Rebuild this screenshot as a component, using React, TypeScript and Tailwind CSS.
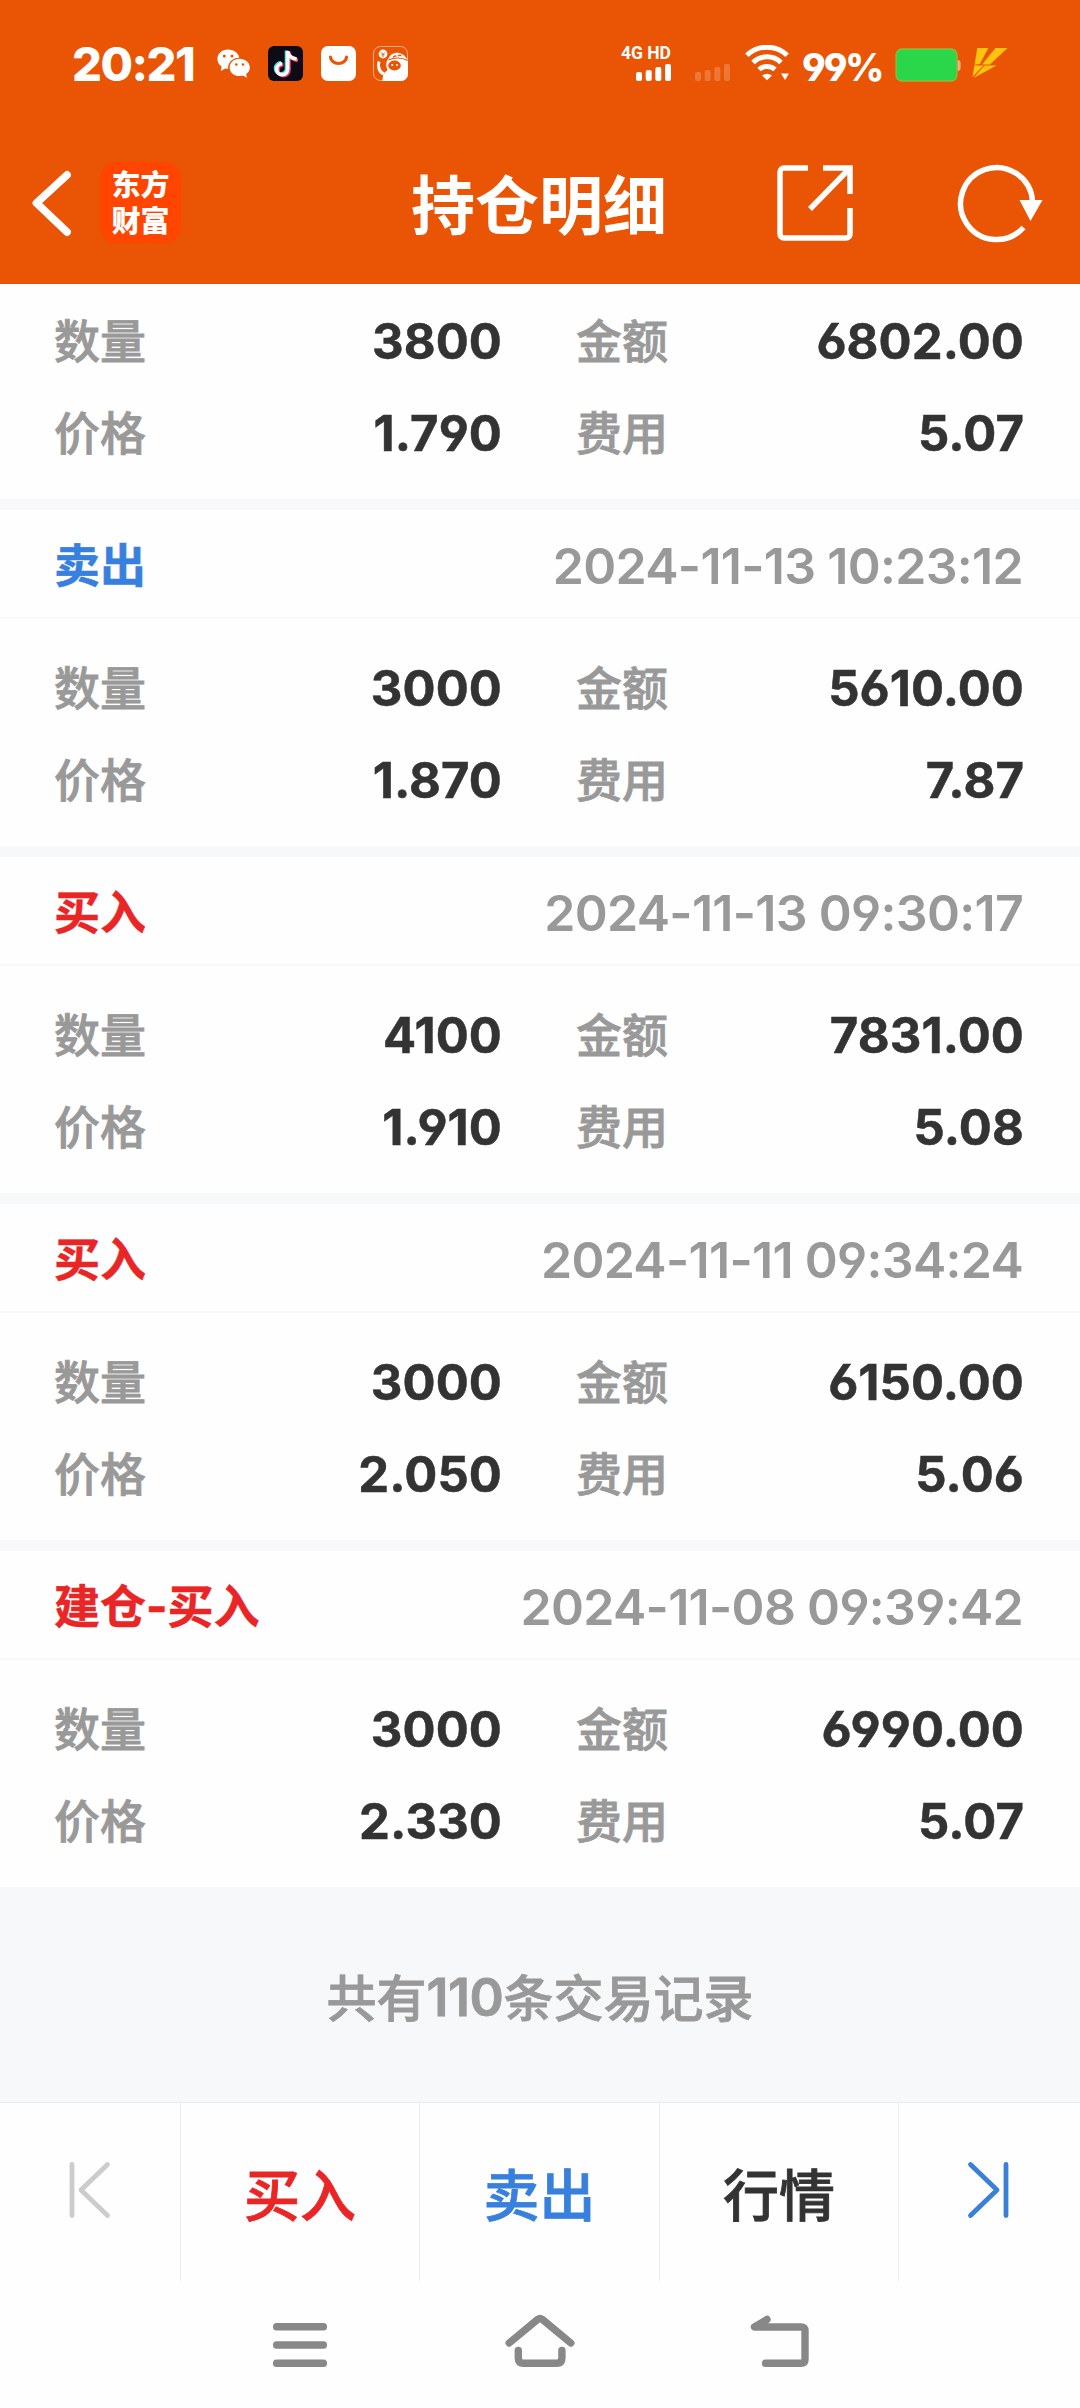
import type { ReactNode } from 'react'

type Side = 'buy' | 'sell'

interface Trade {
  label?: string
  side?: Side
  time?: string
  quantity: string
  amount: string
  price: string
  fee: string
}

const trades: Trade[] = [
  { quantity: '3800', amount: '6802.00', price: '1.790', fee: '5.07' },
  { label: '卖出', side: 'sell', time: '2024-11-13 10:23:12', quantity: '3000', amount: '5610.00', price: '1.870', fee: '7.87' },
  { label: '买入', side: 'buy', time: '2024-11-13 09:30:17', quantity: '4100', amount: '7831.00', price: '1.910', fee: '5.08' },
  { label: '买入', side: 'buy', time: '2024-11-11 09:34:24', quantity: '3000', amount: '6150.00', price: '2.050', fee: '5.06' },
  { label: '建仓-买入', side: 'buy', time: '2024-11-08 09:39:42', quantity: '3000', amount: '6990.00', price: '2.330', fee: '5.07' },
]

function SignalBars({ className }: { className?: string }) {
  return (
    <svg width="35" height="17" viewBox="0 0 35 17" fill="#fff" className={className}>
      <rect x="0" y="8" width="6" height="9" rx="2" />
      <rect x="9.7" y="6" width="6" height="11" rx="2" />
      <rect x="19.3" y="3" width="6" height="14" rx="2" />
      <rect x="29" y="0" width="6" height="17" rx="2" />
    </svg>
  )
}

function StatusBar() {
  return (
    <div className="flex h-[126px] items-center pl-[72px] pr-[72px]">
      <span className="w-[145px] font-['Inter'] text-[47px] leading-none font-extrabold tracking-[-1.500px]">20:21</span>
      {/* WeChat */}
      <svg width="34" height="29" viewBox="0 0 34 29" className="mt-px">
        <path d="M11 0.500C5 .5 .4 4.500 .4 10c0 3.200 1.600 5.800 4.200 7.600L3.800 22l4.500-2.600c1 .2 1.800.3 2.700.3 6 0 11.400-4.200 11.400-9.700S17 .5 11 .5z" fill="#fff" />
        <ellipse cx="22.500" cy="18.500" rx="11.400" ry="10" fill="#e95504" />
        <path d="M22.500 9.700c-5.500 0-9.800 3.800-9.800 8.700s4.300 8.700 9.800 8.700c1.100 0 2.200-.1 3.200-.5l4.300 2.100-.9-3.700c2.400-1.600 3.700-3.900 3.700-6.600 0-4.900-4.800-8.700-10.300-8.700z" fill="#fff" />
        <g fill="#e95504">
          <circle cx="7.300" cy="7" r="1.500" />
          <circle cx="15" cy="7" r="1.500" />
          <circle cx="19.300" cy="15.500" r="1.300" />
          <circle cx="26" cy="15.500" r="1.300" />
        </g>
      </svg>
      {/* TikTok */}
      <svg width="35" height="35" viewBox="0 0 35 35" className="ml-[17px]">
        <rect width="35" height="35" rx="6" fill="#0d0b15" />
        <g fill="none" strokeWidth="3.600">
          <path d="M18.500 4.500v17.800a5.500 5.500 0 1 1-5.500-5.500M18.500 6c1 4 4 6.500 9 7" stroke="#4fdfe0" />
          <path d="M21 5.500v18.800a5.500 5.500 0 1 1-5.500-5.500M21 7c1 4 4 6.500 9 7.500" stroke="#f0386b" />
          <path d="M19.700 5v18.300a5.500 5.500 0 1 1-5.500-5.500M19.700 6c1 4 4 6.500 9 7" stroke="#fff" />
        </g>
      </svg>
      {/* shop bag */}
      <svg width="35" height="35" viewBox="0 0 35 35" className="ml-[18px]">
        <rect width="35" height="35" rx="7" fill="#fff" />
        <path d="M9.500 11a8 6.500 0 0 0 16 0" fill="none" stroke="#e95504" strokeWidth="3.200" strokeLinecap="round" />
      </svg>
      {/* mascot */}
      <svg width="35" height="35" viewBox="0 0 35 35" className="ml-[17px]">
        <rect x=".5" y=".5" width="34" height="34" rx="7" fill="none" stroke="#fff" strokeOpacity=".5" />
        <circle cx="10" cy="8" r="4.400" fill="#fff" />
        <path d="M8 6.300l2 2 2-2M10 8.300V11M8.300 8.800h3.400" stroke="#e95504" strokeWidth=".9" fill="none" />
        <path d="M9.500 35c0-4.500 1-8 5-11-2-4-1.500-9 1-11.500 1.500-4 6-6.500 10.500-5.500 4 .8 7 3.500 9 8v13a7 7 0 0 1-7 7z" fill="#fff" />
        <path d="M6 15.500c-1.500 5 0 10.500 5 12.500" fill="none" stroke="#fff" strokeWidth="3" />
        <path d="M15.500 14c5-2.500 13-3 19 .5M20 11.500c1-1.500 2.500-2 3.500-1M25 10c1-1 2.500-1 3.500 0" fill="none" stroke="#e95504" strokeWidth="1.200" />
        <ellipse cx="21.500" cy="19.500" rx="6.300" ry="5" fill="#e95504" />
        <g fill="#fff">
          <circle cx="19.200" cy="19" r="1.100" />
          <circle cx="24" cy="19" r="1.100" />
        </g>
      </svg>

      <div className="ml-auto flex items-center">
        <div className="flex flex-col items-end gap-[3px]">
          <span className="font-['Roboto'] text-[17.500px] leading-[15px] font-bold">4G HD</span>
          <SignalBars />
        </div>
        <SignalBars className="mt-[18px] ml-[24px] opacity-20" />
        <svg width="45" height="36" viewBox="0 0 45 36" className="ml-[15px]">
          <g fill="none" stroke="#fff" strokeWidth="5">
            <path d="M1.800 10.200a29.500 29.500 0 0 1 40.400 0" />
            <path d="M8 17.500a20 20 0 0 1 28 0" />
            <path d="M14 24.500a12 12 0 0 1 16 0" />
          </g>
          <path d="M17 30.500q5-3.500 10 0l-5 4.800z" fill="#fff" />
          <path d="M36 28.500h8l-4 6.500z" fill="#fff" />
        </svg>
        <span className="ml-[12px] w-[84px] pt-2 font-['Inter'] text-[38px] leading-[36px] font-extrabold tracking-[-2.200px] whitespace-nowrap [font-feature-settings:'cv04']">99%</span>
        <svg width="66" height="34" viewBox="0 0 66 34" className="mt-[3px] ml-[9px]">
          <rect x="1" y="1" width="61" height="32" rx="6" fill="#2bd74a" stroke="#96b83a" strokeWidth="1.300" />
          <path d="M62.600 12q3 0 3 3v5q0 3-3 3z" fill="#fff" fillOpacity=".5" />
        </svg>
        <svg width="38" height="32" viewBox="0 0 38 32" fill="#ffc20e" className="ml-[9px]">
          <path d="M7.300 1h11L10 17l-5.500.7z" />
          <path d="M25.500 1h12L20 17.500h-8z" />
          <path d="M4.300 18.500h9.200L2.500 30z" />
          <path d="M14.500 18.500h12L3.500 31z" />
        </svg>
      </div>
    </div>
  )
}

function TitleBar() {
  return (
    <div className="flex h-[158px] items-start">
      <svg width="44" height="70" viewBox="0 0 44 70" className="mt-[42px] ml-[30px]">
        <path d="M37 7L6.500 35 37 64" fill="none" stroke="#fff" strokeWidth="7.800" strokeLinecap="round" strokeLinejoin="round" />
      </svg>
      <div className="mt-[36px] ml-[26px] h-[81px] w-[81px] rounded-[16px] bg-[#ff4500] pt-[3px] text-center text-[29px] leading-[36px] font-black">
        东方
        <br />
        财富
      </div>
      <h1 className="mt-[33px] ml-[230px] w-[258px] text-[64px] leading-[84px] font-bold whitespace-nowrap">持仓明细</h1>
      <svg width="78" height="78" viewBox="0 0 78 78" className="mt-[38px] ml-[107px]">
        <g fill="none" stroke="#fff" strokeWidth="5.500">
          <path d="M32 4H8a4 4 0 0 0-4 4v62a4 4 0 0 0 4 4h62a4 4 0 0 0 4-4V44" />
          <path d="M47 4h27v26" />
          <path d="M34 45L73 5" />
        </g>
      </svg>
      <svg width="88" height="80" viewBox="0 0 88 80" className="mt-[38px] ml-[103px]">
        <path d="M66.500 63.500A36 36 0 1 1 75.500 37" fill="none" stroke="#fff" strokeWidth="5.500" />
        <path d="M62.500 36h23L73.500 57z" fill="#fff" />
      </svg>
    </div>
  )
}

function Field({ name, value }: { name: string; value: string }) {
  return (
    <div className="flex h-[92px] items-center justify-between">
      <span className="pb-[7px] text-[46px] font-medium text-[#999] [-webkit-text-stroke:0.8px_#999]">{name}</span>
      <span className="font-['Inter'] text-[49px] font-bold tracking-[0.100px] text-[#333] [-webkit-text-stroke:0.5px_#333] [font-feature-settings:'cv03','cv04']">
        {value}
      </span>
    </div>
  )
}

function TradeCard({ trade }: { trade: Trade }) {
  return (
    <section>
      {trade.label && (
        <div className="flex h-[109px] items-center justify-between border-b-2 border-[#f8f8f9] pr-[57px] pl-[54px]">
          <span className={`pt-[3px] font-['Inter','Noto_Sans_CJK_SC'] text-[46px] font-bold [-webkit-text-stroke:0.5px_currentColor] ${trade.side === 'sell' ? 'text-[#3880dd]' : 'text-[#ea2525]'}`}>
            {trade.label}
          </span>
          <span className="pt-[5px] font-['Inter'] text-[50px] font-semibold tracking-[-0.700px] text-[#999] [font-feature-settings:'cv03','cv04']">
            {trade.time}
          </span>
        </div>
      )}
      <div className={`grid grid-cols-2 gap-x-[74px] pr-[56px] pb-[19px] pl-[54px] ${trade.label ? 'pt-[24px]' : 'pt-[12px]'}`}>
        <Field name="数量" value={trade.quantity} />
        <Field name="金额" value={trade.amount} />
        <Field name="价格" value={trade.price} />
        <Field name="费用" value={trade.fee} />
      </div>
    </section>
  )
}

function TabButton({ className, children }: { className?: string; children?: ReactNode }) {
  return (
    <button className={`flex items-center justify-center border-r border-[#ebebeb] text-[56px] font-medium [-webkit-text-stroke:0.8px_currentColor] ${className}`}>
      {children}
    </button>
  )
}

function BottomTabs() {
  return (
    <div className="grid h-[179px] grid-cols-[181px_239px_240px_239px_181px] border-t border-[#ebebeb]">
      <TabButton>
        <svg width="44" height="60" viewBox="0 0 44 60" fill="none" stroke="#ccc" strokeWidth="4.800" strokeLinecap="round" strokeLinejoin="round" className="-mt-[5px]">
          <path d="M4 4.500v51M39.500 4.500L13 30l26.500 25.500" />
        </svg>
      </TabButton>
      <TabButton className="text-[#ea2525]">买入</TabButton>
      <TabButton className="text-[#3880dd]">卖出</TabButton>
      <TabButton className="text-[#333]">行情</TabButton>
      <div className="flex items-center justify-center">
        <svg width="44" height="60" viewBox="0 0 44 60" fill="none" stroke="#3b80d8" strokeWidth="4.800" strokeLinecap="round" strokeLinejoin="round" className="-mt-[5px] mr-[3px]">
          <path d="M40 4.500v51M4.500 4.500L31 30 4.500 55.500" />
        </svg>
      </div>
    </div>
  )
}

function SystemNav() {
  return (
    <nav className="flex h-[127px] items-start pl-[273px]">
      <svg width="54" height="46" viewBox="0 0 54 46" fill="#888" className="mt-[42px]">
        <rect width="54" height="7.500" rx="3.500" />
        <rect y="18.200" width="54" height="7.500" rx="3.500" />
        <rect y="36.400" width="54" height="7.500" rx="3.500" />
      </svg>
      <svg width="70" height="56" viewBox="0 0 70 56" fill="none" stroke="#888" strokeWidth="7.400" strokeLinecap="round" strokeLinejoin="round" className="mt-[32px] ml-[178px]">
        <path d="M4.200 30L33 6.200q2-1.500 4 0L65.800 30" />
        <path d="M13.300 37.500V45q0 5.300 5.300 5.300h33q5.300 0 5.300-5.300v-7.500" />
      </svg>
      <svg width="62" height="56" viewBox="0 0 62 56" fill="none" stroke="#888" strokeWidth="7.400" strokeLinecap="round" strokeLinejoin="round" className="mt-[32px] ml-[175px]">
        <path d="M17 6.500L4.500 14H51q4 0 4 4v28.300q0 4-4 4H15.500" />
      </svg>
    </nav>
  )
}

export default function App() {
  return (
    <div className="flex h-[2408px] w-[1080px] flex-col overflow-hidden bg-[#fefefe] font-['Noto_Sans_CJK_SC',sans-serif]">
      <header className="h-[284px] bg-[#e95504] text-white">
        <StatusBar />
        <TitleBar />
      </header>

      <main className="flex flex-col gap-[11px] bg-[#f7f8fa]">
        {trades.map((trade, i) => (
          <div key={i} className="bg-[#fefefe]">
            <TradeCard trade={trade} />
          </div>
        ))}
      </main>

      <div className="flex h-[215px] items-center justify-center bg-[#f7f8fa] pt-[2px] text-[50px] font-medium text-[#999] [-webkit-text-stroke:0.8px_#999]">
        <span>共有</span>
        <span className="pt-[4px] font-['Inter'] text-[52px] font-semibold tracking-[-0.500px]">110</span>
        <span>条交易记录</span>
      </div>

      <BottomTabs />
      <SystemNav />
    </div>
  )
}
